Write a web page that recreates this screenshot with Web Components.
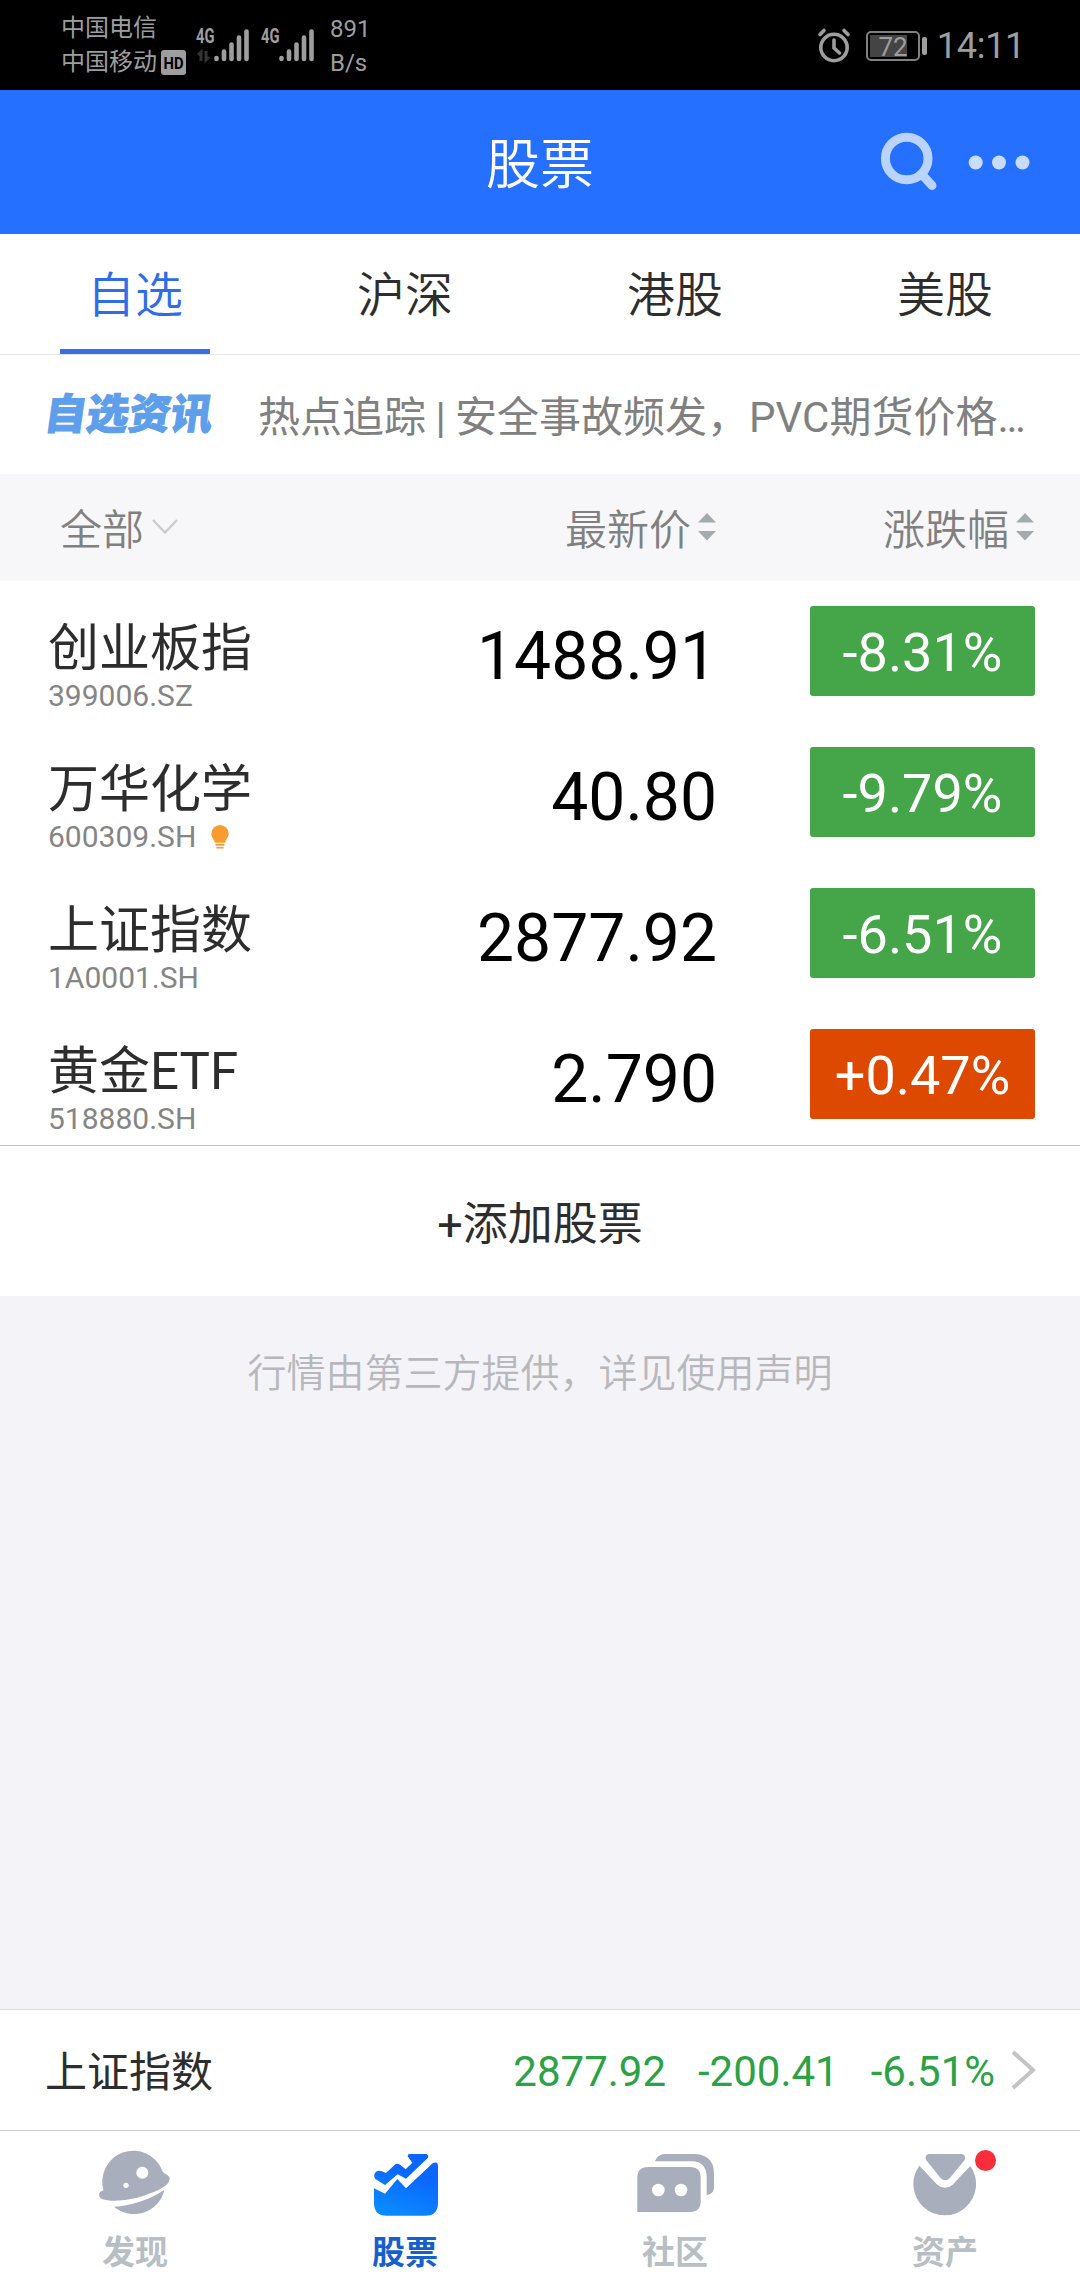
<!DOCTYPE html>
<html lang="zh-CN">
<head>
<meta charset="utf-8">
<title>股票</title>
<style>
    body {
        margin: 0;
        width: 1080px;
        height: 2280px;
        overflow: hidden;
        background: #f3f3f8;
        font-family: Roboto, "Noto Sans CJK SC", sans-serif;
        color: #2d2d2d;
    }
    stock-app {
        height: 2280px;
    }
</style>
</head>
<body>
<stock-app>
    <status-bar></status-bar>
    <app-header>股票</app-header>
    <tab-bar>
        <tab-item active>自选</tab-item>
        <tab-item>沪深</tab-item>
        <tab-item>港股</tab-item>
        <tab-item>美股</tab-item>
    </tab-bar>
    <news-line label="自选资讯">热点追踪 | 安全事故频发，PVC期货价格…</news-line>
    <list-header></list-header>
    <stock-row code="399006.SZ" price="1488.91" change="-8.31%">创业板指</stock-row>
    <stock-row code="600309.SH" price="40.80" change="-9.79%" hint>万华化学</stock-row>
    <stock-row code="1A0001.SH" price="2877.92" change="-6.51%">上证指数</stock-row>
    <stock-row code="518880.SH" price="2.790" change="+0.47%">黄金ETF</stock-row>
    <add-stock>+添加股票</add-stock>
    <data-notice>行情由第三方提供，详见使用声明</data-notice>
    <market-ticker price="2877.92" diff="-200.41" change="-6.51%">上证指数</market-ticker>
    <nav-bar>
        <nav-item icon="discover">发现</nav-item>
        <nav-item icon="stock" active>股票</nav-item>
        <nav-item icon="community">社区</nav-item>
        <nav-item icon="asset" dot>资产</nav-item>
    </nav-bar>
</stock-app>

<script>
class StockApp extends HTMLElement {
    connectedCallback() {
        this.attachShadow({ mode: 'open' });
        this.shadowRoot.innerHTML = `
            <style>
                :host {
                    display: flex;
                    flex-direction: column;
                }
            </style>
            <slot></slot>
        `;
    }
}

class StatusBar extends HTMLElement {
    connectedCallback() {
        const signal = (arrows) => `
            <svg width="50" height="40" viewBox="0 0 50 40">
                <text x="0" y="17" font-size="20" font-weight="700" textLength="18.500" lengthAdjust="spacingAndGlyphs">4G</text>
                ${arrows ? '<path d="M5 35V26l-3 3M10 25v9l3-3" fill="none" stroke="#333" stroke-width="3"/>' : ''}
                <path d="M20.500 32v1M28 25.500V33M35.500 18.500V33M43 11.500V33M50.500 5.500V33" stroke="#9e9e9e" stroke-width="4.600" stroke-linecap="round"/>
            </svg>`;
        this.attachShadow({ mode: 'open' });
        this.shadowRoot.innerHTML = `
            <style>
                :host {
                    display: flex;
                    align-items: center;
                    box-sizing: border-box;
                    height: 90px;
                    padding: 0 55px 0 61px;
                    background: #000;
                    color: #9e9e9e;
                    font-size: 24px;
                    line-height: 34px;
                }
                svg {
                    display: block;
                    overflow: visible;
                    fill: #9e9e9e;
                }
                .carrier {
                    display: flex;
                    align-items: center;
                    gap: 4px;
                }
                .signals {
                    display: flex;
                    gap: 15px;
                    margin: 2px 19px 0 10px;
                }
                .speed {
                    flex: 1;
                    padding-top: 2px;
                }
                .right {
                    display: flex;
                    align-items: center;
                    padding-top: 2px;
                }
                .time {
                    font-size: 36px;
                    letter-spacing: -0.300px;
                    margin-left: 10px;
                }
            </style>
            <div>
                <div class="carrier">中国电信</div>
                <div class="carrier">
                    中国移动
                    <svg width="25" height="25" viewBox="0 0 25 25">
                        <rect width="25" height="25" rx="3"/>
                        <text x="2.500" y="18.500" font-size="17" font-weight="700" fill="#000" textLength="20" lengthAdjust="spacingAndGlyphs">HD</text>
                    </svg>
                </div>
            </div>
            <div class="signals">${signal(true)}${signal(false)}</div>
            <div class="speed">
                <div>891</div>
                <div>B/s</div>
            </div>
            <div class="right">
                <svg width="32" height="34" viewBox="0 0 32 34" style="margin-right: 16px">
                    <g fill="none" stroke="#9e9e9e" stroke-width="3.600" stroke-linecap="round">
                        <circle cx="16" cy="18.500" r="13.200"/>
                        <path d="M16 11v8l5.500 5M2 5.500l4-4M30 5.500l-4-4"/>
                    </g>
                </svg>
                <svg width="61" height="30" viewBox="0 0 61 30">
                    <rect x="1" y="1" width="52" height="28" rx="4" fill="none" stroke="#808080" stroke-width="2"/>
                    <rect x="4" y="4" width="37" height="22" fill="#444"/>
                    <rect x="56" y="6" width="5" height="18" rx="2"/>
                    <text x="12.500" y="24.500" font-size="26">72</text>
                </svg>
                <span class="time">14:11</span>
            </div>
        `;
    }
}

class AppHeader extends HTMLElement {
    connectedCallback() {
        this.attachShadow({ mode: 'open' });
        this.shadowRoot.innerHTML = `
            <style>
                :host {
                    display: grid;
                    grid-template-columns: 1fr auto 1fr;
                    align-items: center;
                    height: 144px;
                    background: #2670ff;
                    color: #fff;
                    font-size: 54px;
                    font-weight: 350;
                    line-height: 78px;
                }
                .title {
                    padding-top: 8px;
                }
                svg {
                    justify-self: end;
                    margin-right: 46px;
                }
            </style>
            <span></span>
            <span class="title"><slot></slot></span>
            <svg width="154" height="64" viewBox="0 0 154 64">
                <g fill="none" stroke="#bad3ff" stroke-width="9">
                    <circle cx="26.700" cy="28.500" r="21.300"/>
                    <path d="M41.500 44l10.500 11.500" stroke-linecap="round"/>
                </g>
                <g fill="#c8dcff">
                    <circle cx="95.700" cy="32.500" r="7"/>
                    <circle cx="119" cy="32.500" r="7"/>
                    <circle cx="142.500" cy="32.500" r="7"/>
                </g>
            </svg>
        `;
    }
}

class TabBar extends HTMLElement {
    connectedCallback() {
        this.attachShadow({ mode: 'open' });
        this.shadowRoot.innerHTML = `
            <style>
                :host {
                    display: flex;
                    height: 120px;
                    background: #fff;
                    border-bottom: 1px solid #e6e6e6;
                }
            </style>
            <slot></slot>
        `;
    }
}

class TabItem extends HTMLElement {
    connectedCallback() {
        this.attachShadow({ mode: 'open' });
        this.shadowRoot.innerHTML = `
            <style>
                :host {
                    flex: 1;
                    display: flex;
                    flex-direction: column;
                    align-items: center;
                    justify-content: space-between;
                    font-size: 48px;
                    font-weight: 350;
                    line-height: 107px;
                }
                :host([active]) {
                    color: #2f6ce8;
                }
                span {
                    padding-top: 8px;
                }
                i {
                    width: 150px;
                    height: 5px;
                }
                :host([active]) i {
                    background: #3a6ee8;
                }
            </style>
            <span><slot></slot></span>
            <i></i>
        `;
    }
}

class NewsLine extends HTMLElement {
    connectedCallback() {
        this.attachShadow({ mode: 'open' });
        this.shadowRoot.innerHTML = `
            <style>
                :host {
                    display: flex;
                    align-items: center;
                    height: 119px;
                    background: #fff;
                    color: #808080;
                    font-size: 42px;
                    line-height: 60px;
                    white-space: nowrap;
                }
                b {
                    width: 168px;
                    margin: 0 45px 0 45px;
                    color: #5e9eea;
                    font-size: 42px;
                    font-weight: 900;
                    -webkit-text-stroke: 1px #5e9eea;
                    transform: skewX(-8deg);
                }
                span {
                    padding-top: 6px;
                    word-spacing: -1px;
                }
            </style>
            <b>${this.getAttribute('label')}</b>
            <span><slot></slot></span>
        `;
    }
}

class ListHeader extends HTMLElement {
    connectedCallback() {
        const sort = `
            <svg width="18" height="28" viewBox="0 0 18 28">
                <path d="M0 9.500L9 0l9 9.500zM0 18h18l-9 9.500z" fill="#a3abae"/>
            </svg>`;
        this.attachShadow({ mode: 'open' });
        this.shadowRoot.innerHTML = `
            <style>
                :host {
                    display: grid;
                    grid-template-columns: 1fr 300px 318px;
                    align-items: center;
                    box-sizing: border-box;
                    height: 107px;
                    padding: 0 46px 0 60px;
                    background: #f7f7fa;
                    border-bottom: 1px solid #f9f9fb;
                    color: #808080;
                    font-size: 42px;
                    font-weight: 350;
                    line-height: 60px;
                }
                div {
                    display: flex;
                    align-items: center;
                    justify-content: flex-end;
                    gap: 7px;
                }
                span {
                    padding-top: 7px;
                }
                .filter {
                    justify-content: flex-start;
                    gap: 8px;
                }
            </style>
            <div class="filter"><span>全部</span>
                <svg width="26" height="16" viewBox="0 0 26 16">
                    <path d="M1 1l12 12.500L25 1" fill="none" stroke="#ccc" stroke-width="2.500"/>
                </svg>
            </div>
            <div><span>最新价</span>${sort}</div>
            <div><span>涨跌幅</span>${sort}</div>
        `;
    }
}

class StockRow extends HTMLElement {
    connectedCallback() {
        const change = this.getAttribute('change');
        const color = change.startsWith('-') ? '#44a648' : '#dd4900';
        const bulb = `
            <svg width="18" height="24" viewBox="0 0 17 23" fill="#f79c30">
                <path d="M8.500 0a8.300 8.300 0 0 1 8.300 8.300c0 3.500-2.600 5-3.500 8.700H3.700C2.800 13.300.2 11.800.2 8.300A8.300 8.300 0 0 1 8.500 0z"/>
                <path d="M4.300 18h8.400v1.800H4.300zM5 21h7v1.500H5z"/>
            </svg>`;
        this.attachShadow({ mode: 'open' });
        this.shadowRoot.innerHTML = `
            <style>
                :host {
                    display: grid;
                    grid-template-columns: 1fr auto 225px;
                    column-gap: 93px;
                    box-sizing: border-box;
                    height: 141px;
                    padding: 25px 45px 0 48px;
                    background: #fff;
                }
                .name {
                    font-size: 51px;
                    line-height: 74px;
                    margin-top: 6px;
                }
                .code {
                    display: flex;
                    align-items: center;
                    gap: 15px;
                    color: #858585;
                    font-size: 30px;
                    line-height: 34px;
                    margin-top: -7px;
                }
                .price {
                    color: #000;
                    font-size: 66px;
                    line-height: 94px;
                    padding-top: 4px;
                }
                .change {
                    height: 90px;
                    border-radius: 3px;
                    background: ${color};
                    color: #fff;
                    font-size: 54px;
                    line-height: 94px;
                    text-align: center;
                }
            </style>
            <div>
                <div class="name"><slot></slot></div>
                <div class="code">${this.getAttribute('code')}${this.hasAttribute('hint') ? bulb : ''}</div>
            </div>
            <div class="price">${this.getAttribute('price')}</div>
            <div class="change">${change}</div>
        `;
    }
}

class AddStock extends HTMLElement {
    connectedCallback() {
        this.attachShadow({ mode: 'open' });
        this.shadowRoot.innerHTML = `
            <style>
                :host {
                    display: block;
                    height: 150px;
                    border-top: 1px solid #bfbfbf;
                    background: #fff;
                    font-size: 45px;
                    line-height: 158px;
                    text-align: center;
                }
            </style>
            <slot></slot>
        `;
    }
}

class DataNotice extends HTMLElement {
    connectedCallback() {
        this.attachShadow({ mode: 'open' });
        this.shadowRoot.innerHTML = `
            <style>
                :host {
                    display: block;
                    flex: 1;
                    padding-top: 50px;
                    color: #b7b7bc;
                    font-size: 39px;
                    font-weight: 350;
                    line-height: 56px;
                    text-align: center;
                }
            </style>
            <slot></slot>
        `;
    }
}

class MarketTicker extends HTMLElement {
    connectedCallback() {
        this.attachShadow({ mode: 'open' });
        this.shadowRoot.innerHTML = `
            <style>
                :host {
                    display: flex;
                    align-items: center;
                    height: 120px;
                    padding: 0 44px 0 45px;
                    background: #fff;
                    border-top: 1px solid #dedee0;
                    font-size: 42px;
                    line-height: 60px;
                }
                .name {
                    flex: 1;
                    padding-top: 5px;
                }
                .values {
                    display: flex;
                    gap: 32px;
                    color: #2ba245;
                    padding-top: 3px;
                    margin-right: 16px;
                }
            </style>
            <span class="name"><slot></slot></span>
            <div class="values">
                <span>${this.getAttribute('price')}</span>
                <span>${this.getAttribute('diff')}</span>
                <span>${this.getAttribute('change')}</span>
            </div>
            <svg width="25" height="40" viewBox="0 0 25 40">
                <path d="M2 2l20 18L2 38" fill="none" stroke="#c4c4c4" stroke-width="4"/>
            </svg>
        `;
    }
}

class NavBar extends HTMLElement {
    connectedCallback() {
        this.attachShadow({ mode: 'open' });
        this.shadowRoot.innerHTML = `
            <style>
                :host {
                    display: flex;
                    height: 149px;
                    background: #fff;
                    border-top: 1px solid #cfcfcf;
                }
            </style>
            <slot></slot>
        `;
    }
}

const navIcons = {
    discover: `
        <svg viewBox="105 54 240 204" fill="#a9aebd">
            <path d="M130 176A93 93 0 0 1 306 117C309 130 330 130 329 145C328 162 300 178 255 193C205 211 150 213 126 204C116 199 115 188 121 182C126 179 131 180 130 176Z"/>
            <path d="M162 227C215 225 270 205 313 177A93 93 0 0 1 162 227Z"/>
            <circle cx="247" cy="125" r="18" fill="#fff"/>
            <circle cx="198" cy="163" r="8" fill="#fff"/>
        </svg>`,
    stock: `
        <svg viewBox="915 54 240 204" fill="url(#blue)">
            <linearGradient id="blue" gradientUnits="userSpaceOnUse" x1="1050" y1="120" x2="1000" y2="255">
                <stop offset="0" stop-color="#0a66ff"/>
                <stop offset="1" stop-color="#0a8cff"/>
            </linearGradient>
            <path d="M1048 69H1098Q1106 70 1104 80L1038 143L1013 130L975 162L946 144Q938 132 948 122Q956 117 966 121L978 126L1006 100Q1013 96 1020 101L1037 115L1057 95L1043 76Q1042 70 1048 69Z"/>
            <path d="M942 172L975 188L1012 144L1038 172L1118 97Q1134 89 1134 106V215Q1134 254 1096 254H980Q942 254 942 215Z"/>
        </svg>`,
    community: `
        <svg viewBox="105 54 240 204" fill="#a9aebd">
            <path d="M164 92Q172 69 196 69H286Q342 73 342 128V172Q340 189 320 193V136Q318 92 276 91H164Z"/>
            <path d="M112 243V140Q112 108 144 108H270Q302 108 302 140V211Q302 243 270 243Z"/>
            <circle cx="175" cy="177" r="19" fill="#fff"/>
            <circle cx="243" cy="177" r="19" fill="#fff"/>
        </svg>`,
    asset: `
        <svg viewBox="915 54 240 204" fill="#a9aebd">
            <path d="M986 69H1085Q1099 73 1094 87L1050 140Q1036 155 1021 140L979 88Q972 73 986 69Z"/>
            <path d="M958 104L1012 161Q1035 180 1058 161L1111 105A94 94 0 1 1 958 104Z"/>
        </svg>`
};

class NavItem extends HTMLElement {
    connectedCallback() {
        this.attachShadow({ mode: 'open' });
        this.shadowRoot.innerHTML = `
            <style>
                :host {
                    flex: 1;
                    display: flex;
                    flex-direction: column;
                    align-items: center;
                    padding-top: 18px;
                    color: #b7bfc5;
                    font-size: 33px;
                    font-weight: 700;
                    line-height: 48px;
                }
                :host([active]) {
                    color: #1560cc;
                }
                .icon {
                    position: relative;
                    width: 80px;
                    height: 68px;
                    margin-bottom: 12px;
                }
                svg {
                    display: block;
                }
                .dot {
                    position: absolute;
                    top: 1px;
                    right: -11px;
                    width: 21px;
                    height: 21px;
                    border-radius: 50%;
                    background: #fb2d3d;
                }
            </style>
            <div class="icon">
                ${navIcons[this.getAttribute('icon')]}
                ${this.hasAttribute('dot') ? '<i class="dot"></i>' : ''}
            </div>
            <span><slot></slot></span>
        `;
    }
}

customElements.define('stock-app', StockApp);
customElements.define('status-bar', StatusBar);
customElements.define('app-header', AppHeader);
customElements.define('tab-bar', TabBar);
customElements.define('tab-item', TabItem);
customElements.define('news-line', NewsLine);
customElements.define('list-header', ListHeader);
customElements.define('stock-row', StockRow);
customElements.define('add-stock', AddStock);
customElements.define('data-notice', DataNotice);
customElements.define('market-ticker', MarketTicker);
customElements.define('nav-bar', NavBar);
customElements.define('nav-item', NavItem);
</script>
</body>
</html>
